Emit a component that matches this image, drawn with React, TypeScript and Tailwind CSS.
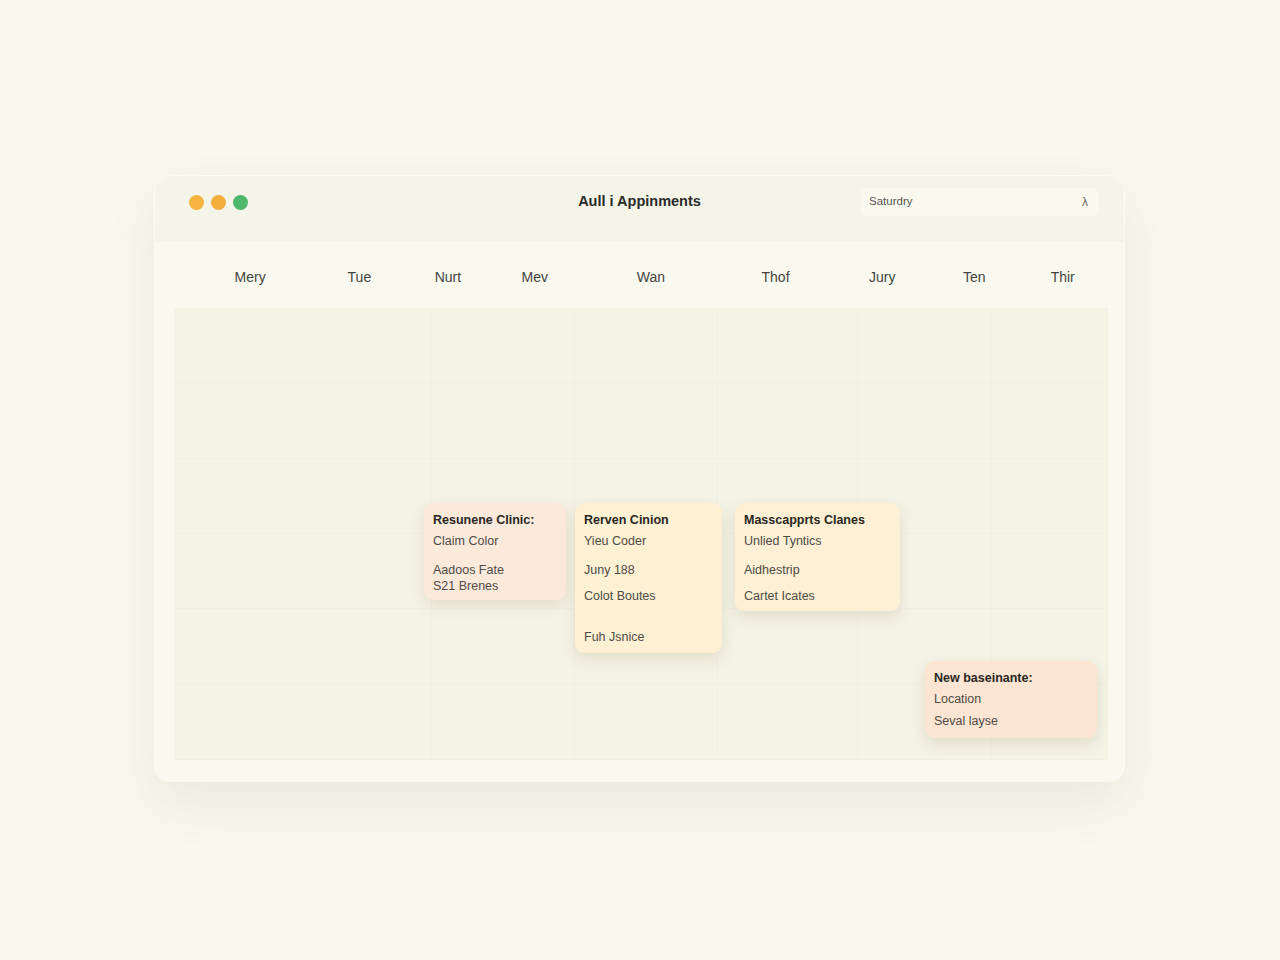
import React from 'react';

interface Appt {
  title: string;
  lines: { text: string; gap: number }[];
  left: number;
  top: number;
  width: number;
  height: number;
  bg: string;
}

const days: { label: string; w: string }[] = [
  { label: 'Mery', w: 'w-[150px]' },
  { label: 'Tue', w: 'w-[71px]' },
  { label: 'Nurt', w: 'w-[108px]' },
  { label: 'Mev', w: 'w-[68px]' },
  { label: 'Wan', w: 'w-[167px]' },
  { label: 'Thof', w: 'w-[85px]' },
  { label: 'Jury', w: 'w-[131px]' },
  { label: 'Ten', w: 'w-[55px]' },
  { label: 'Thir', w: 'w-[124px]' },
];

const Card: React.FC<{ a: Appt }> = ({ a }) => (
  <div
    className={`absolute rounded-[9px] px-[9px] pt-[8px] shadow-[0_6px_14px_rgba(140,110,60,0.16)] ${a.bg}`}
    style={{ left: a.left, top: a.top, width: a.width, height: a.height }}
  >
    <div className="text-[12.5px] font-semibold leading-[18px] text-[#2a2723]">{a.title}</div>
    {a.lines.map((l, i) => (
      <div
        key={i}
        className="text-[12.5px] leading-[16px] text-[#4f4b45]"
        style={{ marginTop: l.gap }}
      >
        {l.text}
      </div>
    ))}
  </div>
);

const appts: Appt[] = [
  {
    title: 'Resunene Clinic:',
    lines: [
      { text: 'Claim Color', gap: 4 },
      { text: 'Aadoos Fate', gap: 13 },
      { text: 'S21 Brenes', gap: 0 },
    ],
    left: 250, top: 195, width: 142, height: 97, bg: 'bg-[#fbe9dc]',
  },
  {
    title: 'Rerven Cinion',
    lines: [
      { text: 'Yieu Coder', gap: 4 },
      { text: 'Juny 188', gap: 13 },
      { text: 'Colot Boutes', gap: 10 },
      { text: 'Fuh Jsnice', gap: 25 },
    ],
    left: 401, top: 195, width: 147, height: 150, bg: 'bg-[#fdf0d3]',
  },
  {
    title: 'Masscapprts Clanes',
    lines: [
      { text: 'Unlied Tyntics', gap: 4 },
      { text: 'Aidhestrip', gap: 13 },
      { text: 'Cartet Icates', gap: 10 },
    ],
    left: 561, top: 195, width: 165, height: 108, bg: 'bg-[#fdf0d4]',
  },
  {
    title: 'New baseinante:',
    lines: [
      { text: 'Location', gap: 4 },
      { text: 'Seval layse', gap: 6 },
    ],
    left: 751, top: 353, width: 172, height: 77, bg: 'bg-[#fce6d3]',
  },
];

export default function App() {
  return (
    <div className="min-h-[960px] w-full bg-[#f8f8ed] pt-[175px] font-['Liberation_Sans',Arial,sans-serif]">
      <div className="ml-[154px] w-[971px] overflow-hidden rounded-[16px] border border-[#fcfcf5] bg-[#f9f9f0] shadow-[0_22px_50px_rgba(90,90,50,0.09)]">
        {/* title bar */}
        <div className="grid h-[66px] grid-cols-[1fr_auto_1fr] items-start bg-[#f4f4e9] px-[26px] pt-[12px]">
          <div className="ml-[8px] flex h-[28px] items-center gap-[7px]">
            <span className="h-[15px] w-[15px] rounded-full bg-[#f4b43f]" />
            <span className="h-[15px] w-[15px] rounded-full bg-[#f1ae3b]" />
            <span className="h-[15px] w-[15px] rounded-full bg-[#4db86b]" />
          </div>
          <div className="flex h-[28px] items-center text-[14.5px] font-semibold text-[#2a2a28]">
            Aull i Appinments
          </div>
          <div className="flex justify-end">
            <div className="flex h-[28px] w-[237px] items-center justify-between rounded-[6px] bg-[#f9f9f0] pl-[8px] pr-[10px]">
              <span className="text-[11.5px] text-[#575650]">Saturdry</span>
              <span className="text-[12px] text-[#6a6a62]">λ</span>
            </div>
          </div>
        </div>

        {/* day labels */}
        <div className="flex h-[66px] items-center pl-[21px] pt-[4px]">
          {days.map((d) => (
            <div key={d.label} className={`${d.w} text-center text-[14px] text-[#44433e]`}>
              {d.label}
            </div>
          ))}
        </div>

        {/* grid */}
        <div className="mb-[21px] ml-[19px] mr-[16px]">
          <div className="relative h-[452px] rounded-[3px] bg-[#f3f3e6]">
            <div className="grid h-full grid-cols-[258px_143px_143px_140px_134px_1fr] grid-rows-6">
              {Array.from({ length: 36 }).map((_, i) => (
                <div
                  key={i}
                  className="border-b border-r border-[#efefe2] last:border-r-0"
                />
              ))}
            </div>
            {appts.map((a) => (
              <Card key={a.title} a={a} />
            ))}
          </div>
        </div>
      </div>
    </div>
  );
}
